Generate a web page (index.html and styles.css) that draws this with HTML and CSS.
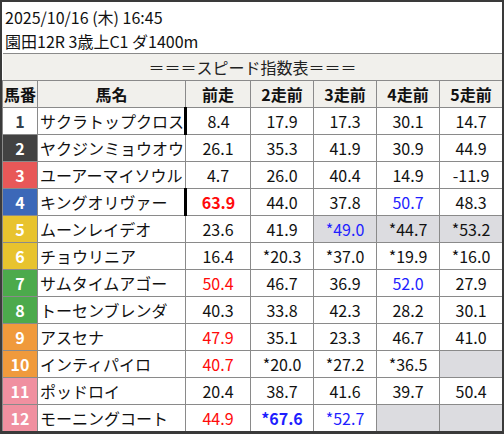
FILE: index.html
```html
<!DOCTYPE html>
<html lang="ja">
<head>
<meta charset="utf-8">
<link rel="stylesheet" href="styles.css">
</head>
<body>
<div class="card">
  <div class="info">
    <div class="line">2025/10/16 (木) 16:45</div>
    <div class="line">園田12R 3歳上C1 ダ1400m</div>
  </div>
  <table class="tbl">
    <colgroup>
      <col class="c-no"><col class="c-name"><col class="c-prev"><col class="c-r"><col class="c-r"><col class="c-r"><col class="c-r">
    </colgroup>
    <tr><td class="title" colspan="7">＝＝＝スピード指数表＝＝＝</td></tr>
    <tr class="head"><th>馬番</th><th>馬名</th><th>前走</th><th>2走前</th><th>3走前</th><th>4走前</th><th>5走前</th></tr>
    <tr><td class="no w1">1</td><td class="name">サクラトップクロス</td><td class="mark">8.4</td><td>17.9</td><td>17.3</td><td>30.1</td><td>14.7</td></tr>
    <tr><td class="no w2">2</td><td class="name">ヤクジンミョウオウ</td><td>26.1</td><td>35.3</td><td>41.9</td><td>30.9</td><td>44.9</td></tr>
    <tr><td class="no w3">3</td><td class="name">ユーアーマイソウル</td><td>4.7</td><td>26.0</td><td>40.4</td><td>14.9</td><td>-11.9</td></tr>
    <tr><td class="no w4">4</td><td class="name">キングオリヴァー</td><td class="mark red bold">63.9</td><td>44.0</td><td>37.8</td><td class="blue">50.7</td><td>48.3</td></tr>
    <tr><td class="no w5">5</td><td class="name">ムーンレイデオ</td><td>23.6</td><td>41.9</td><td class="gray blue">*49.0</td><td class="gray">*44.7</td><td class="gray">*53.2</td></tr>
    <tr><td class="no w5">6</td><td class="name">チョウリニア</td><td>16.4</td><td>*20.3</td><td>*37.0</td><td>*19.9</td><td>*16.0</td></tr>
    <tr><td class="no w7">7</td><td class="name">サムタイムアゴー</td><td class="red">50.4</td><td>46.7</td><td>36.9</td><td class="blue">52.0</td><td>27.9</td></tr>
    <tr><td class="no w7">8</td><td class="name">トーセンブレンダ</td><td>40.3</td><td>33.8</td><td>42.3</td><td>28.2</td><td>30.1</td></tr>
    <tr><td class="no w9">9</td><td class="name">アスセナ</td><td class="red">47.9</td><td>35.1</td><td>23.3</td><td>46.7</td><td>41.0</td></tr>
    <tr><td class="no w9">10</td><td class="name">インティパイロ</td><td class="red">40.7</td><td>*20.0</td><td>*27.2</td><td>*36.5</td><td class="gray"></td></tr>
    <tr><td class="no w11">11</td><td class="name">ポッドロイ</td><td>20.4</td><td>38.7</td><td>41.6</td><td>39.7</td><td>50.4</td></tr>
    <tr><td class="no w11">12</td><td class="name">モーニングコート</td><td class="red">44.9</td><td class="blue bold">*67.6</td><td class="blue">*52.7</td><td class="gray"></td><td class="gray"></td></tr>
  </table>
</div>
</body>
</html>
```

FILE: styles.css
```css
html, body {
  margin: 0;
  padding: 0;
  background: #ffffff;
}
body {
  font-family: "Noto Sans CJK JP", "Noto Sans", sans-serif;
  font-size: 16px;
  color: #111;
}
.card {
  width: 504px;
  height: 434px;
  box-sizing: border-box;
  border: 2px solid #3a3a3a;
  border-bottom-width: 3px;
  background: #fff;
  overflow: hidden;
}
.info {
  height: 51px;
  box-sizing: border-box;
  padding: 3px 3px 0 3px;
}
.line {
  line-height: 24px;
  height: 24px;
  white-space: nowrap;
}
.tbl {
  width: 500px;
  border-collapse: collapse;
  table-layout: fixed;
}
.c-no { width: 35px; }
.c-name { width: 148px; }
.c-prev { width: 65px; }
.c-r { width: 63px; }
.tbl td, .tbl th {
  border: 1px solid #8a8a8a;
  height: 26px;
  padding: 0;
  line-height: 24px;
  text-align: center;
  white-space: nowrap;
  overflow: hidden;
}
.tbl th {
  font-weight: bold;
  background: #f1f0ec;
  color: #111;
}
.tbl td.title {
  background: #f1f0ec;
  color: #222;
  border-left: none;
  border-right: none;
}
.tbl td.name {
  text-align: left;
  padding-left: 2px;
}
.tbl td.mark {
  border-left: 3px solid #000;
}
.tbl td.no {
  font-weight: bold;
  color: #fff;
}
.tbl td.w1 { background: #ffffff; color: #34404c; }
.w2 { background: #424242; }
.w3 { background: #e85858; }
.w4 { background: #3c68b8; }
.w5 { background: #e8c32e; }
.w7 { background: #4caa4c; }
.w9 { background: #f09a3c; }
.w11 { background: #f090a0; }
.red { color: #ff0a0a; }
.blue { color: #1f1fff; }
.bold { font-weight: bold; }
.gray { background: #dcdce0; }
```
